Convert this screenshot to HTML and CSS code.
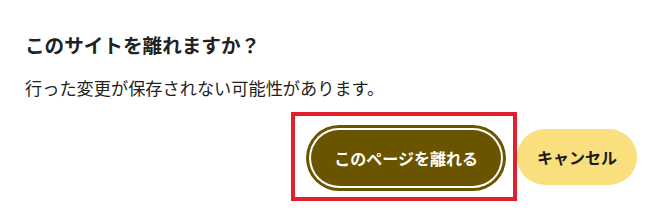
FILE: index.html
```html
<!DOCTYPE html>
<html lang="ja">
<head>
  <meta charset="UTF-8">
  <title>このサイトを離れますか？</title>
  <link rel="stylesheet" href="styles.css">
</head>
<body>
  <div class="dialog">
    <h1 class="dialog-title">このサイトを離れますか？</h1>
    <p class="dialog-text">行った変更が保存されない可能性があります。</p>
    <div class="actions">
      <div class="highlight">
        <button class="btn btn-leave">このページを離れる</button>
      </div>
      <button class="btn btn-cancel">キャンセル</button>
    </div>
  </div>
</body>
</html>
```

FILE: styles.css
```css
body {
  margin: 0;
  background: #fff;
  font-family: "Noto Sans CJK JP", "Noto Sans", sans-serif;
  color: #1f1f1f;
}
.dialog {
  padding: 31px 25px 0;
}
.dialog-title {
  margin: 0;
  font-size: 19.6px;
  line-height: 28px;
  font-weight: bold;
  color: #222;
}
.dialog-text {
  margin: 17px 0 0;
  font-size: 17.2px;
  line-height: 24px;
}
.actions {
  display: flex;
  justify-content: flex-end;
  align-items: center;
  margin-top: 12px;
}
.highlight {
  display: flex;
  padding: 14px 12px 11px 16px;
  border: 4px solid #e0202c;
}
.btn {
  height: 56px;
  padding: 0 23px;
  border: none;
  border-radius: 28px;
  font-family: inherit;
  font-size: 16px;
  font-weight: bold;
  cursor: pointer;
}
.btn-leave {
  background: #6b5400;
  color: #fff;
  box-shadow: 0 0 0 2px #fff, 0 0 0 5px #6b5400;
}
.btn-cancel {
  background: #f9df7e;
  color: #1a1a1a;
  padding: 0 20px;
}
```
